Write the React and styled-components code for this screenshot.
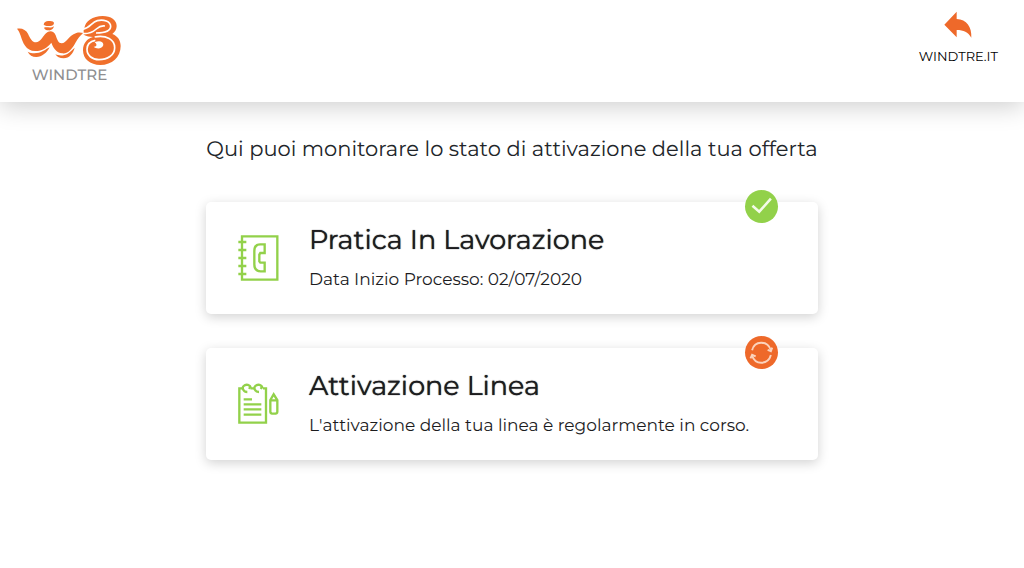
import React from 'react'
import styled, { createGlobalStyle } from 'styled-components'

const GlobalStyle = createGlobalStyle`
    *{
        box-sizing: border-box;
    }
    body{
        margin: 0;
        background: #fff;
        color: #212529;
        font-family: Montserrat, Inter, 'Liberation Sans', sans-serif;
        text-rendering: geometricPrecision;
    }
    h1, h2, p{
        margin: 0;
        font-weight: 400;
    }
`;

const steps = [
    {
        title: 'Pratica In Lavorazione',
        text: 'Data Inizio Processo: 02/07/2020',
        Icon: PhoneBook,
        done: true
    },
    {
        title: 'Attivazione Linea',
        text: "L'attivazione della tua linea è regolarmente in corso.",
        Icon: Notepad,
        done: false
    }
]

function Logo() {
    return (
        <svg width="105" height="51" viewBox="21 22 315 153" fill="#f0702c" aria-hidden="true">
            <path d="M101 51C102 43 109 39 117 40C125 39 132 42 132 46C132 52 125 56 119 55C113 54 106 56 101 51Z" />
            <path d="M102 60C111 57 123 63 132 56C130 65 123 69 115 68C109 67 104 66 102 60Z" />
            <path d="M21 63C35 60 48 66 54 78C60 92 67 104 78 104C91 104 98 87 108 77C117 67 132 69 137 83C142 97 145 107 155 107C170 107 174 84 199 76C207 73 214 75 221 76C211 82 204 92 196 106C184 128 171 139 157 137C138 135 129 119 124 105C113 119 97 130 76 130C47 130 38 103 32 84C29 75 26 68 21 63Z" />
            <path d="M53 132C66 139 85 138 99 130C108 126 113 121 119 119C111 135 96 148 79 148C67 148 58 142 53 132Z" />
            <path d="M136 139C146 145 161 145 173 138C182 133 187 125 194 120C190 137 178 151 161 152C149 152 141 148 136 139Z" />
            <path d="M223 62C226 40 248 25 278 25C303 25 320 37 320 55C320 65 315 73 307 79C323 85 332 98 332 115C332 149 306 172 271 172C240 172 219 154 219 128C219 107 231 93 249 88C239 87 230 86 221 81V62Z" />
            <path d="M218 65C240 62 244 44 262 39C280 34 302 41 302 56C302 70 285 76 258 76" fill="none" stroke="#fff" strokeWidth="5" />
            <path d="M218 78C235 79 248 74 259 64C267 57 274 53 285 55" fill="none" stroke="#fff" strokeWidth="5" />
            <path d="M254 88C290 81 314 97 314 120C314 143 292 156 267 156C246 156 231 143 231 125C231 110 240 101 256 98" fill="none" stroke="#fff" strokeWidth="5" />
            <path d="M254 104C268 97 281 102 280 112C277 124 259 125 251 117C260 118 263 111 254 104Z" fill="#fff" />
        </svg>
    )
}

function BackArrow() {
    return (
        <svg width="28" height="28" viewBox="119 31 84 84" aria-hidden="true">
            <path d="M120 72L157 33V55C187 56 203 79 201 111C191 94 178 88 157 88V110Z" fill="#ee692a" />
        </svg>
    )
}

function PhoneBook() {
    return (
        <svg width="41" height="46" viewBox="38 29 123 138" fill="none" stroke="#92d14a" strokeWidth="7" aria-hidden="true">
            <path d="M50 33H156V163H50Z" />
            <path d="M39 50H63M39 74H63M39 98H63M39 122H63M39 146H63" />
            <path d="M118 57H105C92 57 87 65 87 77V117C87 130 94 138 106 138H118V112H105L102 108V88L105 83H118Z" />
        </svg>
    )
}

function Notepad() {
    return (
        <svg width="41" height="42" viewBox="38 34 123 126" fill="none" stroke="#92d14a" strokeWidth="7" aria-hidden="true">
            <path d="M52 50H42V153H122V50H113M76 50H88" />
            <path d="M66 61C54 61 49 49 55 43C62 36 75 39 76 50M101 61C89 61 84 49 90 43C97 36 110 39 111 50" />
            <path d="M76 50L70 47M111 50L105 47" />
            <path d="M55 83H80M55 98H108M55 113H108M55 129H108" />
            <path d="M135 85L145 68L156 85V120C156 128 135 128 135 120ZM135 86H156" />
        </svg>
    )
}

function CheckMark() {
    return (
        <svg width="33" height="33" viewBox="0 0 102 102" fill="none" stroke="#f4fbe9" strokeWidth="8" role="img" aria-label="Completato">
            <path d="M23 49L44 67L80 27" />
        </svg>
    )
}

function Refresh() {
    return (
        <svg width="33" height="33" viewBox="0 0 102 102" fill="none" stroke="#fbd3bd" strokeWidth="6" role="img" aria-label="In corso">
            <path d="M22 44C29 15 69 12 80 44" />
            <path d="M80 59C72 89 32 91 22 61" />
            <path d="M70 43L80 47L84 36M17 69L22 58L33 63" />
        </svg>
    )
}

function App() {
    return (
        <>
            <GlobalStyle />
            <Header>
                <LogoLink href="#" aria-label="WINDTRE">
                    <Logo />
                    <span>WINDTRE</span>
                </LogoLink>
                <BackLink href="#">
                    <BackArrow />
                    WINDTRE.IT
                </BackLink>
            </Header>
            <Main>
                <PageTitle>Qui puoi monitorare lo stato di attivazione della tua offerta</PageTitle>
                <Steps>
                    {steps.map(({ title, text, Icon, done }) => (
                        <Card key={title}>
                            <Icon />
                            <CardBody>
                                <h2>{title}</h2>
                                <p>{text}</p>
                            </CardBody>
                            <Badge $done={done}>
                                {done ? <CheckMark /> : <Refresh />}
                            </Badge>
                        </Card>
                    ))}
                </Steps>
            </Main>
        </>
    )
}

const Header = styled.header`
    display: flex;
    justify-content: space-between;
    align-items: flex-start;
    padding: 11px 26px 18px 17px;
    box-shadow: 0 4px 24px rgba(0, 0, 0, 0.2);
`;

const LogoLink = styled.a`
    display: flex;
    flex-direction: column;
    align-items: center;
    padding-top: 4px;
    color: #8e8e90;
    font-size: 15px;
    font-weight: 500;
    line-height: 18px;
    text-decoration: none;
`;

const BackLink = styled.a`
    display: flex;
    flex-direction: column;
    align-items: center;
    gap: 8px;
    color: #000;
    font-size: 13px;
    line-height: 20px;
    text-decoration: none;
`;

const Main = styled.main`
    display: flex;
    flex-direction: column;
    align-items: center;
    gap: 36px;
    padding: 32px 16px;
`;

const PageTitle = styled.h1`
    font-size: 21px;
    line-height: 32px;
    text-align: center;
`;

const Steps = styled.div`
    display: flex;
    flex-direction: column;
    gap: 34px;
    width: 100%;
    max-width: 612px;
`;

const Card = styled.section`
    position: relative;
    display: flex;
    align-items: center;
    gap: 30px;
    padding: 20px 32px;
    border-radius: 5px;
    background: #fff;
    box-shadow: 0 3px 12px rgba(0, 0, 0, 0.18);
    svg{
        flex-shrink: 0;
    }
`;

const CardBody = styled.div`
    color: #1c1c1e;
    h2{
        margin-bottom: 8px;
        font-size: 27px;
        line-height: 36px;
        text-shadow: 0 0 1px #1c1c1e;
    }
    p{
        font-size: 17px;
        line-height: 28px;
    }
`;

const Badge = styled.span`
    position: absolute;
    top: -12px;
    right: 40px;
    display: flex;
    border-radius: 50%;
    background: ${props => props.$done ? '#92d14a' : '#ee692a'};
`;

export default App
